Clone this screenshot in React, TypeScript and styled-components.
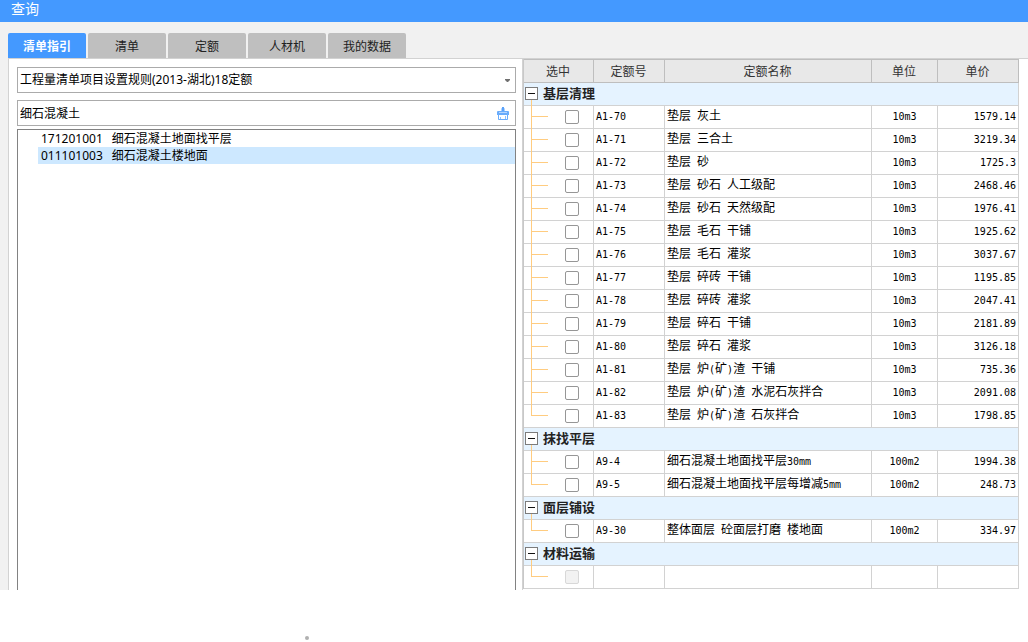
import React, { Fragment, useState } from "react";
import styled, { createGlobalStyle, css } from "styled-components";

const ui = `"Noto Sans", "Noto Sans CJK SC", sans-serif`;
const cjk = `"Noto Sans CJK SC", sans-serif`;
const mono = `"DejaVu Sans Mono", "Noto Sans CJK SC", monospace`;

const GlobalStyle = createGlobalStyle`
  *, *::before, *::after { box-sizing: border-box; }
  body { margin: 0; background: #fff; color: #000; font: 12px/16px ${ui}; }
  button, input, select { font: inherit; color: inherit; margin: 0; }
`;

const TitleBar = styled.header`
  height: 22px;
  padding: 0 11px 6px;
  background: #4499ff;
  color: #fff;
  display: flex;
  align-items: center;
`;

const Title = styled.h1`
  margin: 0;
  font: 400 14px/16px ${cjk};
`;

const Workspace = styled.main`
  background: #f1f1f1;
  padding: 11px 0 0 8px;
`;

const Tabs = styled.div`
  display: flex;
  gap: 2px;
`;

const Tab = styled.button<{ $active: boolean }>`
  width: 78px;
  height: 25px;
  padding: 0;
  border: 0;
  border-radius: 2px 2px 0 0;
  font-family: ${cjk};
  background: ${(p) => (p.$active ? "#4499ff" : "#bfbfbf")};
  color: ${(p) => (p.$active ? "#fff" : "#222")};
  font-weight: ${(p) => (p.$active ? 700 : 400)};
`;

const Panels = styled.div`
  display: grid;
  grid-template-columns: 257fr 253fr;
  border-top: 1px solid #d2d2d2;
  background: #fff;
`;

const GuidePanel = styled.section`
  display: flex;
  flex-direction: column;
  border-left: 1px solid #d2d2d2;
  padding: 8px 6px 0 8px;
`;

const Field = styled.div`
  display: flex;
  align-items: center;
  height: 26px;
  border: 1px solid #ababab;
  background: #fff;
`;

const ComboField = styled(Field)`
  margin-bottom: 7px;
`;

const SearchField = styled(Field)`
  margin-bottom: 3px;
`;

const controlText = css`
  flex: 1;
  min-width: 0;
  height: 24px;
  padding: 0 2px;
  border: 0;
  outline: 0;
  background: transparent;
`;

const RuleSelect = styled.select`
  ${controlText}
  appearance: none;
`;

const SearchInput = styled.input`
  ${controlText}
`;

const Arrow = styled.svg`
  flex: none;
  width: 5px;
  height: 3px;
  margin-right: 5px;
  pointer-events: none;
`;

const ClearButton = styled.button`
  display: flex;
  flex: none;
  padding: 0;
  border: 0;
  margin-right: 6px;
  background: transparent;
`;

const ResultList = styled.ul`
  flex: 1;
  margin: 0;
  padding: 0 0 0 20px;
  list-style: none;
  border: 1px solid #828282;
  border-bottom: 0;
`;

const ResultItem = styled.li<{ $selected: boolean }>`
  display: flex;
  gap: 9px;
  height: 17px;
  padding-left: 3px;
  line-height: 17px;
  background: ${(p) => (p.$selected ? "#cde8ff" : "transparent")};
`;

const QuotaPanel = styled.section`
  border-left: 1px solid #d2d2d2;
  padding: 0 9px 1px 0;
`;

const QuotaTable = styled.table`
  width: 100%;
  table-layout: fixed;
  border-collapse: separate;
  border-spacing: 0;
  border-left: 1px solid #c8c8c8;
  font-family: ${cjk};
`;

const Col = styled.col<{ $width?: number }>`
  width: ${(p) => (p.$width ? `${p.$width}px` : "auto")};
`;

const HeadCell = styled.th`
  height: 24px;
  padding: 0 1px 0 0;
  border: solid #bebebe;
  border-width: 1px 1px 1px 0;
  background: #e8e8e8;
  color: #333;
  font-weight: 400;
`;

const Cell = styled.td<{ $align?: "center" | "right" }>`
  height: 23px;
  padding: 0 2px 2px;
  border: solid #d2d2d2;
  border-width: 0 1px 1px 0;
  text-align: ${(p) => p.$align ?? "left"};
  white-space: pre;
  overflow: hidden;
`;

const stem = css`
  content: "";
  position: absolute;
  left: 7px;
  width: 1px;
  background: #ffcc80;
`;

const GroupCell = styled(Cell)`
  position: relative;
  padding: 0 1px 2px;
  background: #e5f3ff;
  overflow: visible;
  &::after {
    ${stem}
    top: 17px;
    bottom: -1px;
  }
`;

const GroupLabel = styled.div`
  display: flex;
  align-items: center;
  gap: 5px;
  color: #222;
  font-size: 13px;
  font-weight: 700;
`;

const Expander = styled.button`
  display: flex;
  align-items: center;
  justify-content: center;
  width: 13px;
  height: 13px;
  padding: 0;
  border: 1px solid #7c7c7c;
  background: #fff;
  &::before {
    content: "";
    width: 7px;
    height: 1px;
    background: #111;
  }
`;

const TreeCell = styled(Cell)<{ $last: boolean }>`
  position: relative;
  padding: 0 0 0 41px;
  overflow: visible;
  &::before {
    ${stem}
    top: 0;
    bottom: ${(p) => (p.$last ? "11px" : "-1px")};
  }
  &::after {
    content: "";
    position: absolute;
    left: 8px;
    top: 10px;
    width: 16px;
    height: 1px;
    background: #ffcc80;
  }
`;

const Check = styled.input`
  appearance: none;
  display: block;
  width: 14px;
  height: 14px;
  border: 1px solid #969696;
  border-radius: 2px;
  background: #fff;
  &:checked { background: #4499ff; }
  &:disabled { border-color: #d8d8d8; background: #f2f2f2; }
`;

const Latin = styled.span`
  font: 10px/16px ${mono};
`;

const Footer = styled.footer`
  display: flex;
  align-items: flex-end;
  height: 50px;
  padding-left: 305px;
`;

const Dot = styled.span`
  width: 4px;
  height: 4px;
  border-radius: 2px;
  background: #b0b0b0;
`;

const tabs = ["清单指引", "清单", "定额", "人材机", "我的数据"];

const results = [
  { code: "171201001", name: "细石混凝土地面找平层" },
  { code: "011101003", name: "细石混凝土楼地面" },
];

type Item = [code: string, name: string, unit: string, price: string];

const groups: { title: string; items: Item[] }[] = [
  {
    title: "基层清理",
    items: [
      ["A1-70", "垫层 灰土", "10m3", "1579.14"],
      ["A1-71", "垫层 三合土", "10m3", "3219.34"],
      ["A1-72", "垫层 砂", "10m3", "1725.3"],
      ["A1-73", "垫层 砂石 人工级配", "10m3", "2468.46"],
      ["A1-74", "垫层 砂石 天然级配", "10m3", "1976.41"],
      ["A1-75", "垫层 毛石 干铺", "10m3", "1925.62"],
      ["A1-76", "垫层 毛石 灌浆", "10m3", "3037.67"],
      ["A1-77", "垫层 碎砖 干铺", "10m3", "1195.85"],
      ["A1-78", "垫层 碎砖 灌浆", "10m3", "2047.41"],
      ["A1-79", "垫层 碎石 干铺", "10m3", "2181.89"],
      ["A1-80", "垫层 碎石 灌浆", "10m3", "3126.18"],
      ["A1-81", "垫层 炉(矿)渣 干铺", "10m3", "735.36"],
      ["A1-82", "垫层 炉(矿)渣 水泥石灰拌合", "10m3", "2091.08"],
      ["A1-83", "垫层 炉(矿)渣 石灰拌合", "10m3", "1798.85"],
    ],
  },
  {
    title: "抹找平层",
    items: [
      ["A9-4", "细石混凝土地面找平层30mm", "100m2", "1994.38"],
      ["A9-5", "细石混凝土地面找平层每增减5mm", "100m2", "248.73"],
    ],
  },
  { title: "面层铺设", items: [["A9-30", "整体面层 砼面层打磨 楼地面", "100m2", "334.97"]] },
  { title: "材料运输", items: [["", "", "", ""]] },
];

/* Latin runs are set in a half-width face, Chinese runs in the full-width one. */
const MixedText = ({ text }: { text: string }) => (
  <>
    {text.split(/([\x20-\x7e]+)/).map((run, i) =>
      i % 2 ? <Latin key={i}>{run}</Latin> : run
    )}
  </>
);

const BrushIcon = () => (
  <svg width="12" height="13" viewBox="0 0 12 13" aria-hidden="true">
    <rect x="4" y="1" width="4" height="4" rx="1" fill="#a9cfff" />
    <rect x="5" y="0" width="2" height="4" fill="#5aa2fa" />
    <path d="M0 8V5Q0 4 1 4H11Q12 4 12 5V8Z" fill="#6aacfb" />
    <rect x="2" y="5" width="8" height="1" fill="#b5d6ff" />
    <path d="M1.5 7.5V12.5H10.5V7.5Z" fill="#fff" stroke="#69abfb" />
    <path d="M3.5 12V10M8.5 12V9" fill="none" stroke="#8fc1ff" />
  </svg>
);

export default function App() {
  const [tab, setTab] = useState(0);
  const [selected, setSelected] = useState(1);
  const [closed, setClosed] = useState<string[]>([]);

  const toggle = (title: string) =>
    setClosed((list) =>
      list.includes(title) ? list.filter((t) => t !== title) : [...list, title]
    );

  return (
    <div lang="zh-CN">
      <GlobalStyle />
      <TitleBar>
        <Title>查询</Title>
      </TitleBar>
      <Workspace>
        <Tabs role="tablist">
          {tabs.map((name, i) => (
            <Tab key={name} role="tab" aria-selected={i === tab} $active={i === tab} onClick={() => setTab(i)}>
              {name}
            </Tab>
          ))}
        </Tabs>
        <Panels>
          <GuidePanel>
            <ComboField>
              <RuleSelect aria-label="清单规则">
                <option>工程量清单项目设置规则(2013-湖北)18定额</option>
              </RuleSelect>
              <Arrow viewBox="0 0 5 3" aria-hidden="true">
                <path d="M0 0H5V1L3 3H2L0 1Z" fill="#707070" />
              </Arrow>
            </ComboField>
            <SearchField>
              <SearchInput aria-label="搜索" defaultValue="细石混凝土" />
              <ClearButton aria-label="清除">
                <BrushIcon />
              </ClearButton>
            </SearchField>
            <ResultList>
              {results.map((r, i) => (
                <ResultItem key={r.code} $selected={i === selected} onClick={() => setSelected(i)}>
                  <span>{r.code}</span>
                  <span>{r.name}</span>
                </ResultItem>
              ))}
            </ResultList>
          </GuidePanel>
          <QuotaPanel>
            <QuotaTable>
              <colgroup>
                <Col $width={70} />
                <Col $width={71} />
                <Col />
                <Col $width={66} />
                <Col $width={81} />
              </colgroup>
              <thead>
                <tr>
                  {["选中", "定额号", "定额名称", "单位", "单价"].map((h) => (
                    <HeadCell key={h} scope="col">{h}</HeadCell>
                  ))}
                </tr>
              </thead>
              <tbody>
                {groups.map((g) => (
                  <Fragment key={g.title}>
                    <tr>
                      <GroupCell colSpan={5}>
                        <GroupLabel>
                          <Expander aria-label={g.title} aria-expanded={!closed.includes(g.title)} onClick={() => toggle(g.title)} />
                          {g.title}
                        </GroupLabel>
                      </GroupCell>
                    </tr>
                    {!closed.includes(g.title) &&
                      g.items.map(([code, name, unit, price], i) => (
                        <tr key={code}>
                          <TreeCell $last={i === g.items.length - 1}>
                            <Check type="checkbox" aria-label={code || g.title} disabled={!code} />
                          </TreeCell>
                          <Cell><MixedText text={code} /></Cell>
                          <Cell><MixedText text={name} /></Cell>
                          <Cell $align="center"><MixedText text={unit} /></Cell>
                          <Cell $align="right"><MixedText text={price} /></Cell>
                        </tr>
                      ))}
                  </Fragment>
                ))}
              </tbody>
            </QuotaTable>
          </QuotaPanel>
        </Panels>
      </Workspace>
      <Footer>
        <Dot />
      </Footer>
    </div>
  );
}
